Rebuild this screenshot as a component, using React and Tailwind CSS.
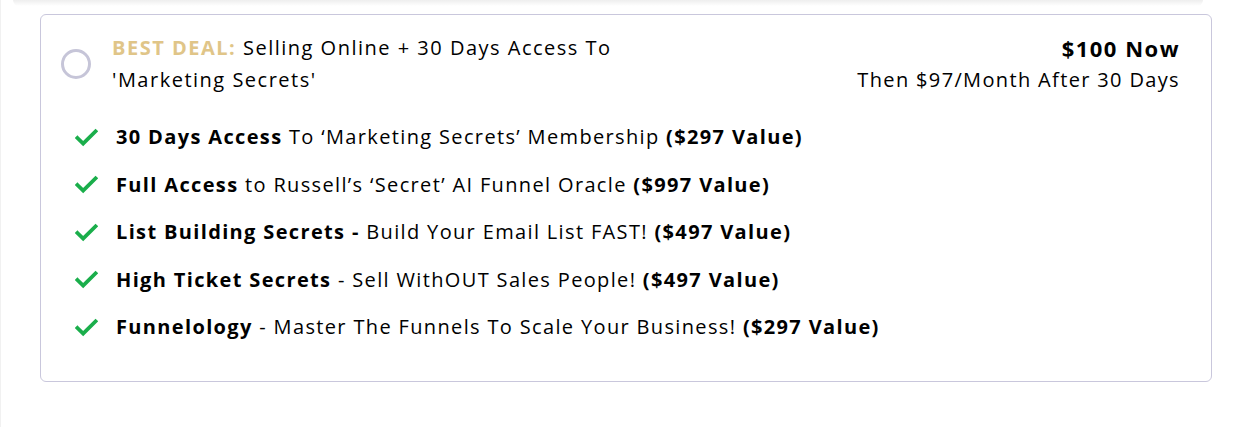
import React from "react";

const items = [
  { bold: "30 Days Access", rest: " To ‘Marketing Secrets’ Membership ", value: "($297 Value)" },
  { bold: "Full Access", rest: " to Russell’s ‘Secret’ AI Funnel Oracle ", value: "($997 Value)" },
  { bold: "List Building Secrets -", rest: " Build Your Email List FAST! ", value: "($497 Value)" },
  { bold: "High Ticket Secrets", rest: " - Sell WithOUT Sales People! ", value: "($497 Value)" },
  { bold: "Funnelology", rest: " - Master The Funnels To Scale Your Business! ", value: "($297 Value)" },
];

const Check = () => (
  <svg viewBox="0 0 24 20" className="w-[23px] h-[19px] shrink-0">
    <path d="M2.5 10.5 L8.5 16.5 L21.5 3.5" fill="none" stroke="#1aae4b" strokeWidth="4" strokeLinecap="square" />
  </svg>
);

export default function App() {
  return (
    <div className="w-[1250px] h-[427px] bg-white border-l border-[#f1f1f1] overflow-hidden text-black" style={{ fontFamily: "'Open Sans', 'Noto Sans', sans-serif" }}>
      <div className="mx-[12px] h-[6px] rounded-b-[6px] bg-gradient-to-b from-[#eeeeee] to-white w-[1190px]" />
      <div className="ml-[39px] mt-[8px] w-[1172px] border border-[#c9c7dc] rounded-[6px] pl-[20px] pr-[31px] pt-[17px] pb-[40px]">
        <div className="flex items-center">
          <div className="w-[30px] h-[30px] rounded-full border-[3px] border-[#c6c5d8] shrink-0" />
          <div className="ml-[21px] w-[530px] text-[20px] leading-[32px] tracking-[1.5px]">
            <span className="font-bold text-[#e0c588]">BEST DEAL:</span> Selling Online + 30 Days Access To 'Marketing Secrets'
          </div>
          <div className="ml-auto text-right self-start">
            <div className="text-[22px] leading-[32px] font-bold tracking-[1.5px]">$100 Now</div>
            <div className="text-[20px] leading-[32px] tracking-[1.35px]">Then $97/Month After 30 Days</div>
          </div>
        </div>
        <div className="mt-[27px] ml-[14px] flex flex-col gap-[19.5px]">
          {items.map((it) => (
            <div key={it.bold} className="flex items-center h-[28px]">
              <Check />
              <div className="ml-[18px] text-[20px] leading-[28px] tracking-[1.35px] whitespace-nowrap">
                <span className="font-bold">{it.bold}</span>
                {it.rest}
                <span className="font-bold">{it.value}</span>
              </div>
            </div>
          ))}
        </div>
      </div>
    </div>
  );
}
